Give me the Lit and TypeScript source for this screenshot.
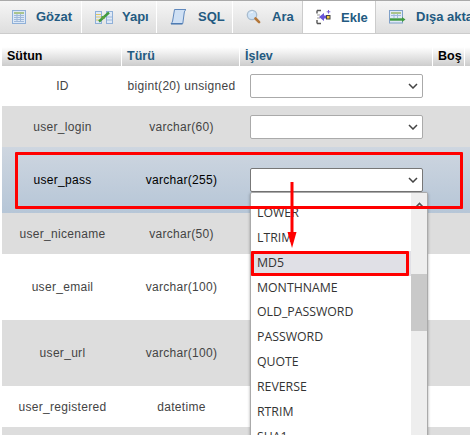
import { LitElement, html, css, svg } from "lit";
import { customElement } from "lit/decorators.js";

const icons: Record<string, unknown> = {
  browse: svg`<rect x="1.5" y="1.5" width="13" height="13" fill="#dce8f6" stroke="#8fb0d8"/><rect x="3" y="3" width="10" height="2" fill="#a9c48c"/><path d="M3 6.5h10M3 8.5h10M3 10.5h10M3 12.5h10M6 5v8M9.5 5v8" stroke="#9fb9da" stroke-width="1" fill="none"/>`,
  struct: svg`<rect x="0.5" y="2.5" width="6" height="12" fill="#dfe9f7" stroke="#8fb0d8"/><path d="M1 5.5h5M1 8h5M1 11h5" stroke="#e0c860"/><rect x="11.5" y="2.5" width="6" height="12" fill="#dfe9f7" stroke="#8fb0d8"/><path d="M12 8h5M12 11h5" stroke="#9fb9da"/><path d="M4 12.5 L14 3.5" stroke="#3f9a3f" stroke-width="2.4" fill="none"/><rect x="6.5" y="7" width="3" height="3" fill="#5aa23a"/>`,
  sql: svg`<path d="M4.5 0.5h11.5c-1.2 1-1.6 2-1.8 3.5l-1.4 10.5H1c.7-.5 1.4-1.3 1.6-2.5L4.5 0.5z" fill="#cfe0f4" stroke="#5f88bd"/><path d="M1 15h11.5" stroke="#3f6fa8"/>`,
  search: svg`<circle cx="6" cy="6" r="4.7" fill="#cfe3f6" stroke="#a8bccf" stroke-width="1.3"/><path d="M4 4.5a3 3 0 0 1 3-1.5" stroke="#fff" fill="none"/><path d="M9.5 9.5l3.6 3.6" stroke="#b4773a" stroke-width="2.6" stroke-linecap="round"/>`,
  insert: svg`<path d="M1 1.5h4M1 14.5h4M1 1.5v3M1 11v3.5" stroke="#555" stroke-width="1.4" fill="none"/><path d="M1 6h3M1 9h3" stroke="#999"/><path d="M3 8l5-4v2.5h4v3H8V12z" fill="#6a55d8"/><rect x="10.5" y="6.5" width="3.5" height="3.5" fill="#f6c93c" stroke="#444"/><path d="M12.5 1v3.6M10.7 2.8h3.6" stroke="#7a60d8" stroke-width="1"/>`,
  export: svg`<rect x="1.5" y="1.5" width="13" height="12.5" fill="#dfe9f7" stroke="#7fa0c8"/><rect x="3" y="3" width="10" height="2" fill="#a9c48c"/><path d="M3 6.5h10M6 5v4M9.5 5v4" stroke="#9fb9da"/><path d="M2 10.5h12" stroke="#3f9a3f" stroke-width="2.4"/><path d="M14 8l3.5 2.5L14 13z" fill="#3f9a3f"/>`,
};

const tabs = [
  { key: "browse", label: "Gözat", w: 82, pad: 11, gap: 7 },
  { key: "struct", label: "Yapı", w: 75, pad: 13, gap: 9 },
  { key: "sql", label: "SQL", w: 76, pad: 13, gap: 10 },
  { key: "search", label: "Ara", w: 70, pad: 13, gap: 8 },
  { key: "insert", label: "Ekle", w: 74, pad: 13, gap: 7, active: true },
  { key: "export", label: "Dışa aktar", w: 110, pad: 12, gap: 10 },
];

const rows = [
  { name: "ID", type: "bigint(20) unsigned", h: 40, tone: "odd", sel: true },
  { name: "user_login", type: "varchar(60)", h: 41, tone: "even", sel: true },
  { name: "user_pass", type: "varchar(255)", h: 66, tone: "hover", sel: true },
  { name: "user_nicename", type: "varchar(50)", h: 41, tone: "even" },
  { name: "user_email", type: "varchar(100)", h: 66, tone: "odd" },
  { name: "user_url", type: "varchar(100)", h: 66, tone: "even" },
  { name: "user_registered", type: "datetime", h: 41, tone: "odd" },
  { name: "", type: "", h: 20, tone: "even" },
];

const options = ["LOWER", "LTRIM", "MD5", "MONTHNAME", "OLD_PASSWORD", "PASSWORD", "QUOTE", "REVERSE", "RTRIM", "SHA1"];

@customElement("app-root")
export class AppRoot extends LitElement {
  static styles = css`
    :host { display: block; position: relative; width: 470px; height: 435px; overflow: hidden; background: #fff; font-family: "Liberation Sans", Arial, sans-serif; }
    .tabs { display: flex; height: 34px; box-sizing: border-box; border-top: 1px solid #aaa; border-bottom: 1px solid #ccc; background: linear-gradient(#f6f6f6, #dedede); white-space: nowrap; overflow: hidden; }
    .tab { flex: none; box-sizing: border-box; display: flex; align-items: center; height: 32px; padding-bottom: 1px; border-right: 1px solid #fff; font-size: 13px; font-weight: bold; color: #235a81; }
    .tab svg { flex: none; width: 18px; height: 16px; }
    .tab.active { background: #fff; height: 33px; border-left: 1px solid #ccc; border-right: 1px solid #ccc; margin-left: -1px; }
    .table { margin: 13px 0 0 2px; }
    .head, .row { display: grid; grid-template-columns: 120px 118px 193px 32px 5px; }
    .head { height: 19px; }
    .th { box-sizing: border-box; padding-left: 5px; font-size: 12.5px; font-weight: bold; line-height: 19px; color: #235a81; background: linear-gradient(#fff, #ccc); border-right: 1px solid #fff; }
    .th.dark { color: #000; }
    .row { align-items: center; font-size: 12px; color: #444; }
    .row.odd { background: #fff; }
    .row.even { background: #ddd; }
    .row.hover { background: linear-gradient(#ced6e0, #b6c6d7); color: #000; }
    .cell { text-align: center; letter-spacing: 0.3px; padding-left: 1px; white-space: nowrap; }
    .selcell { padding-left: 10px; }
    .select { box-sizing: border-box; width: 173px; height: 24px; background: #fff; border: 1px solid #aaa; border-radius: 2px; display: flex; align-items: center; justify-content: flex-end; padding-right: 4px; }
    .hover .select { border-color: #777; }
    .select svg { width: 10px; height: 6px; }
    .menu { position: absolute; left: 250px; top: 192px; width: 178px; height: 260px; box-sizing: border-box; background: #fff; border: 1px solid #aaa; border-radius: 2px; box-shadow: 0 1px 3px rgba(0,0,0,.35); display: flex; overflow: hidden; }
    .list { width: 160px; padding-top: 8px; flex: none; }
    .opt { height: 24.85px; line-height: 24.85px; padding-left: 6px; font-family: "Open Sans", "Noto Sans", sans-serif; font-size: 12.3px; color: #333; }
    .opt.on { background: #e0e0e6; }
    .bar { flex: 1; background: #eee; position: relative; }
    .thumb { position: absolute; left: 0; right: 0; top: 81px; height: 57px; background: #c9c9c9; }
    .bar svg { position: absolute; left: 4px; top: 9px; width: 9px; height: 6px; }
    .mark { position: absolute; box-sizing: border-box; border: 3px solid #f00; border-radius: 1px; }
    .mark.big { left: 15px; top: 152px; width: 448px; height: 57px; }
    .mark.md5 { left: 251px; top: 251px; width: 158px; height: 25px; }
    .arrow { position: absolute; left: 285px; top: 182px; width: 14px; height: 68px; }
  `;

  private chevron() {
    return html`<svg viewBox="0 0 10 6"><path d="M1 1l4 4 4-4" fill="none" stroke="#444" stroke-width="1.5"/></svg>`;
  }

  render() {
    return html`
      <div class="tabs">
        ${tabs.map(t => html`<div class="tab ${t.active ? "active" : ""}" style="width:${t.w}px;padding-left:${t.pad}px;gap:${t.gap}px">
          <svg viewBox="0 0 18 16">${icons[t.key]}</svg><span>${t.label}</span></div>`)}
      </div>
      <div class="table">
        <div class="head">
          <div class="th dark">Sütun</div><div class="th">Türü</div><div class="th">İşlev</div><div class="th dark">Boş</div><div class="th"></div>
        </div>
        ${rows.map(r => html`<div class="row ${r.tone}" style="height:${r.h}px">
          <div class="cell">${r.name}</div><div class="cell">${r.type}</div>
          <div class="selcell">${r.sel ? html`<div class="select">${this.chevron()}</div>` : ""}</div>
        </div>`)}
      </div>
      <div class="menu">
        <div class="list">${options.map(o => html`<div class="opt ${o === "MD5" ? "on" : ""}">${o}</div>`)}</div>
        <div class="bar"><svg viewBox="0 0 9 6"><path d="M1 5l3.5-3.5L8 5" fill="none" stroke="#555" stroke-width="1.6"/></svg><div class="thumb"></div></div>
      </div>
      <div class="mark big"></div>
      <div class="mark md5"></div>
      <svg class="arrow" viewBox="0 0 14 68"><path d="M7 0v52" stroke="#f00" stroke-width="3"/><path d="M2.5 50h9l-4.5 16z" fill="#f00"/></svg>
    `;
  }
}
